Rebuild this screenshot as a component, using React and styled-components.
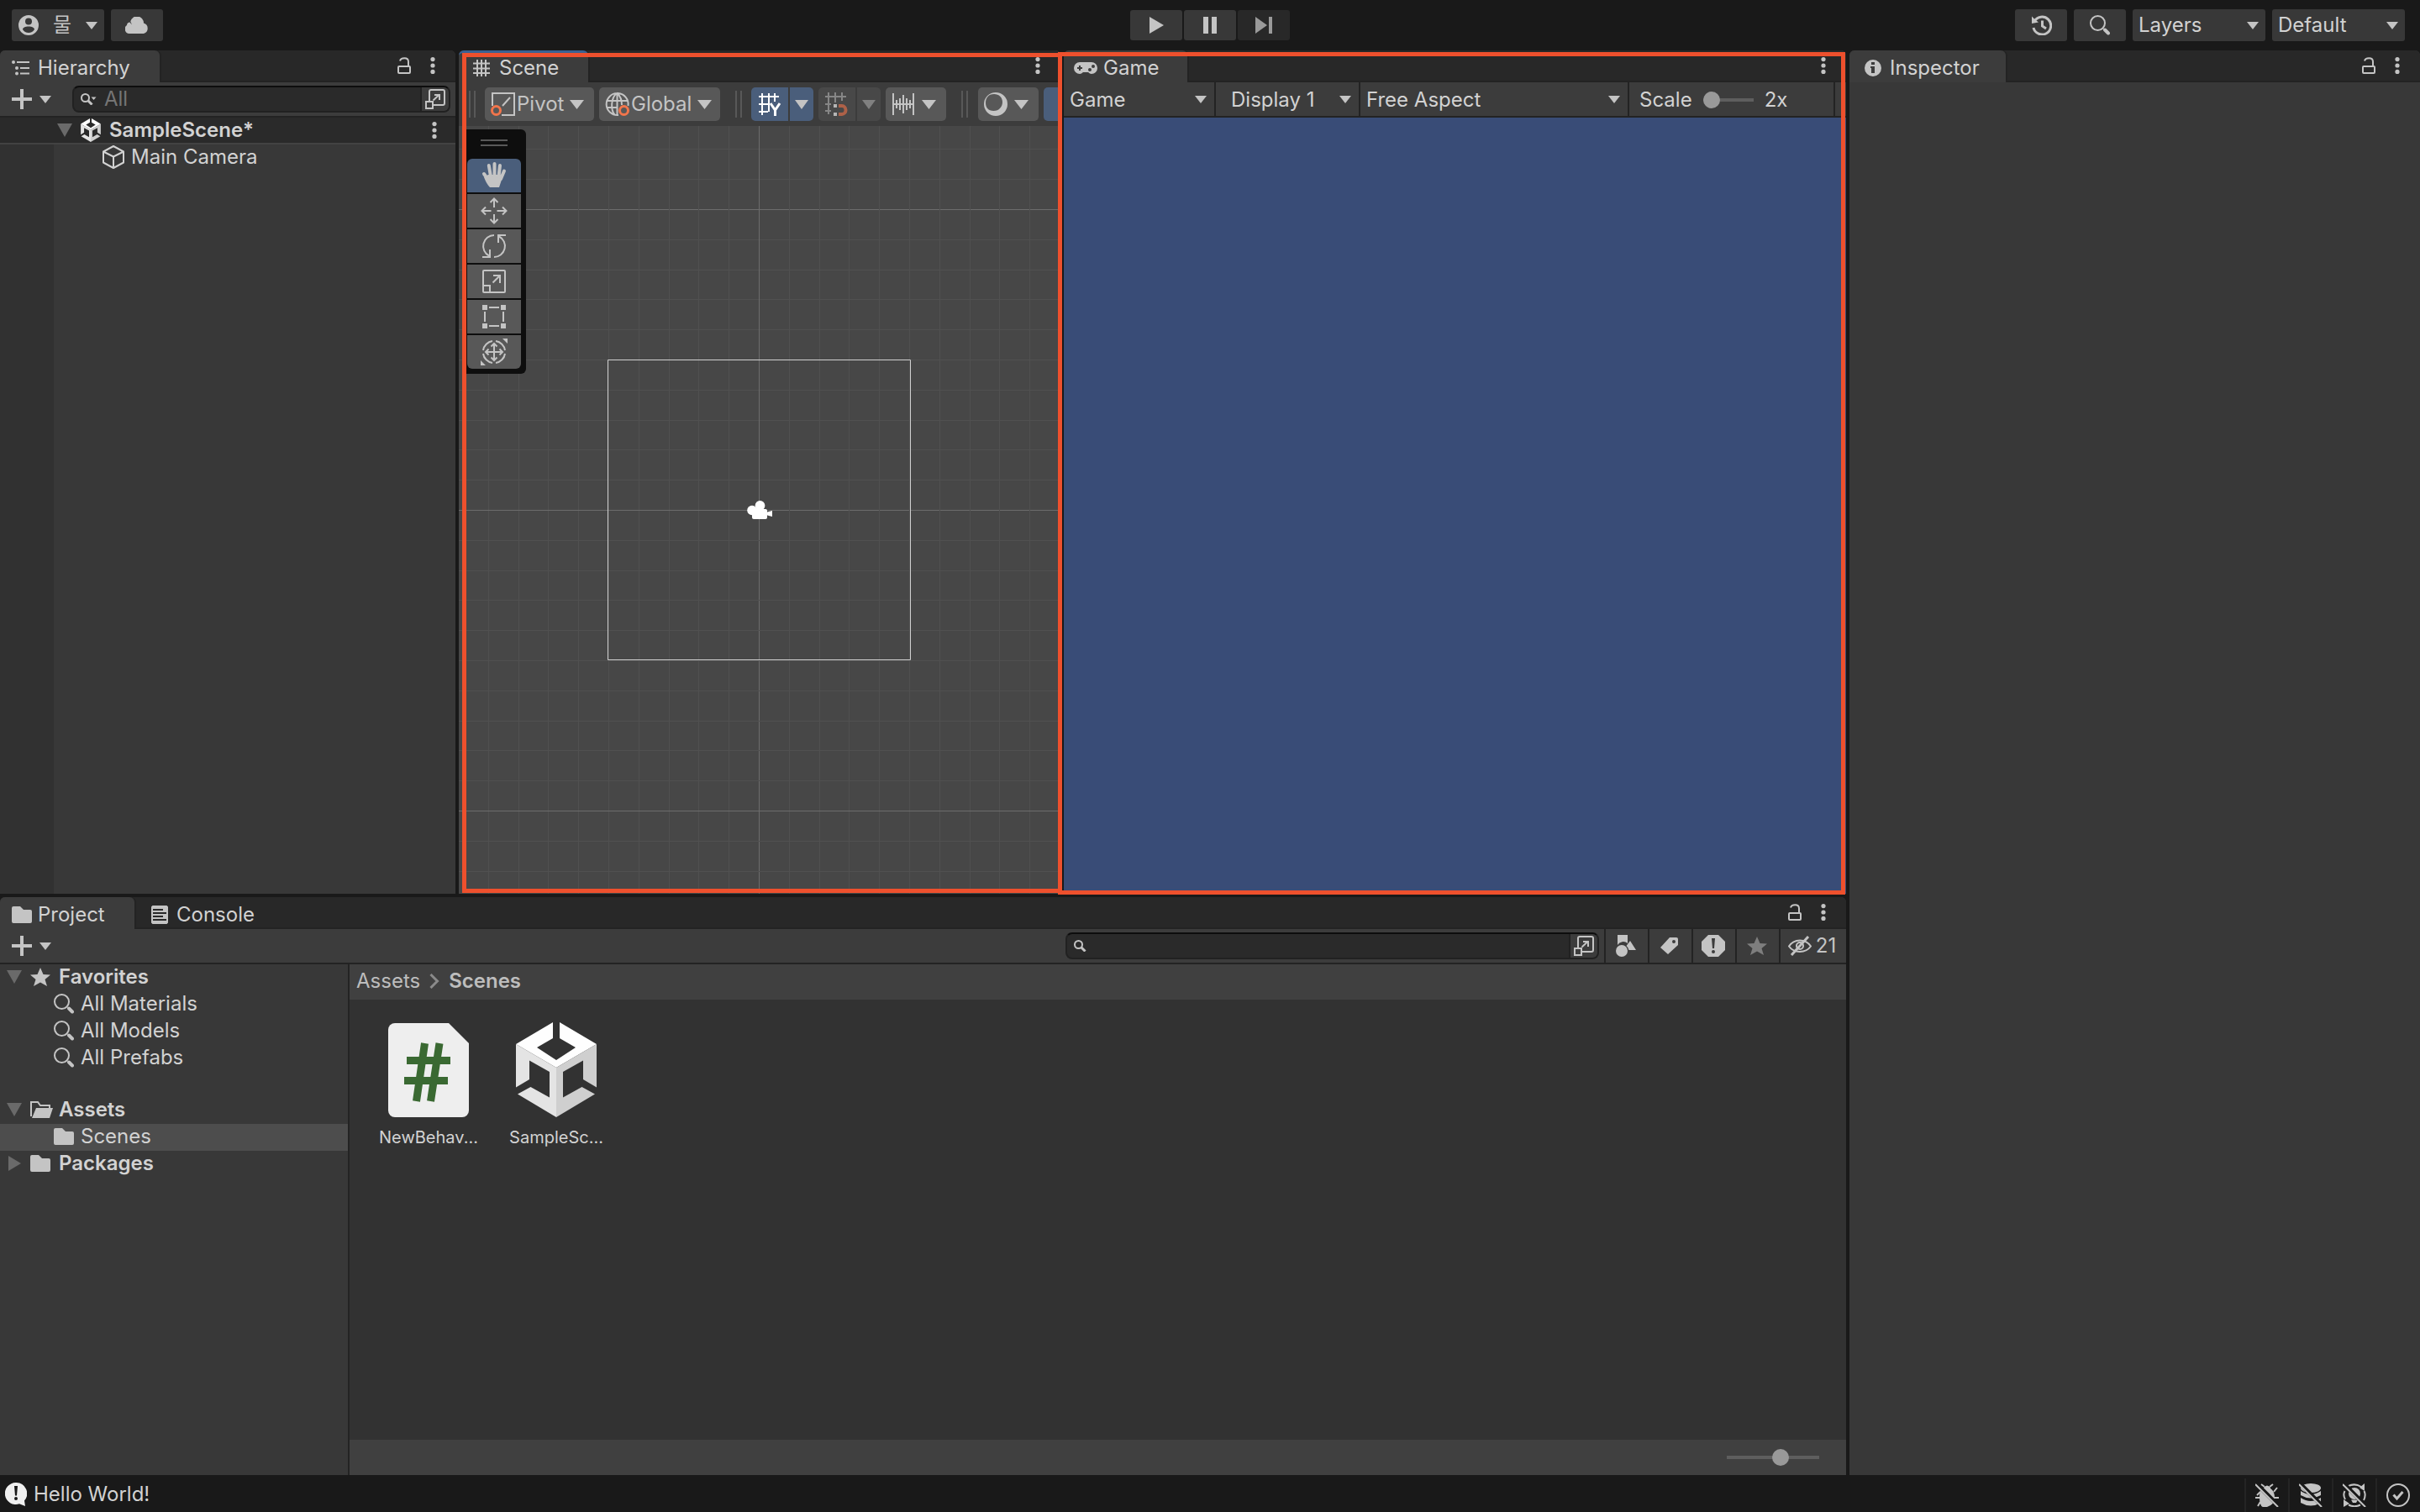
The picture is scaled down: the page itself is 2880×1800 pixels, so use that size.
/* eslint-disable max-len */
import React, { useState } from 'react';
import styled, { createGlobalStyle, css, ThemeProvider } from 'styled-components';

const theme = {
  colors: {
    chrome: '#191919',
    tabBar: '#282828',
    panel: '#383838',
    toolbar: '#3c3c3c',
    line: '#232323',
    field: '#2a2a2a',
    text: '#d2d2d2',
    icon: '#c4c4c4',
    active: '#4a5e7b',
    frame: '#ee502d'
  }
};

const GlobalStyle = createGlobalStyle`
  *, *::before, *::after { box-sizing: border-box; }
  body {
    margin: 0;
    background: #191919;
    color: #d2d2d2;
    font-family: Inter, 'Noto Sans CJK KR', sans-serif;
    font-size: 24px;
    line-height: 32px;
  }
  button, input, select {
    margin: 0;
    padding: 0;
    border: 0;
    background: none;
    color: inherit;
    font: inherit;
  }
  ul { margin: 0; padding: 0; list-style: none; }
  svg { display: block; flex: none; }
`;

/* ---------- icons ---------- */

const Svg = ({ w, h, children, ...rest }) => (
  <svg width={w} height={h} viewBox={`0 0 ${w} ${h}`} fill='currentColor' aria-hidden='true' {...rest}>{children}</svg>
);

const Stroke = ({ width = 2, ...rest }) => (
  <g fill='none' stroke='currentColor' strokeWidth={width} {...rest} />
);

const Caret = ({ w = 14, h = 9 }) => <Svg w={w} h={h}><path d={`M0 0H${w}L${w / 2} ${h}Z`} /></Svg>;

const Dots = () => (
  <Svg w={6} h={20}>
    <circle cx='3' cy='2.6' r='2.6' /><circle cx='3' cy='10' r='2.6' /><circle cx='3' cy='17.4' r='2.6' />
  </Svg>
);

const Lock = () => (
  <Svg w={16} h={20}>
    <Stroke><rect x='1' y='11' width='14' height='8' rx='1' /><path d='M3 4.5C4 .5 13 -.5 13 5.5V11' /></Stroke>
  </Svg>
);

const Plus = () => <Svg w={24} h={24}><path d='M10 0h4v10h10v4H14v10h-4V14H0v-4h10z' /></Svg>;

const AccountIcon = () => (
  <Svg w={24} h={24}>
    <path fillRule='evenodd' d='M12 0a12 12 0 1 1 0 24a12 12 0 0 1 0-24zM12 3.5a4 4 0 1 0 0 8a4 4 0 0 0 0-8zM12 13.5c-4 0-7 1.600-7 3.500c1.500 2.500 4 4 7 4s5.500-1.500 7-4c0-1.900-3-3.500-7-3.500z' />
  </Svg>
);

const CloudIcon = () => (
  <Svg w={28} h={20}>
    <path d='M5.500 20a5.500 5.500 0 0 1-3.500-10c0-2 1.500-3.500 3.500-3.500L8 9.500C7.500 8 6.500 6.500 6.300 5.200A8 8 0 0 1 22 7.500A6.500 6.500 0 0 1 22 20z' />
  </Svg>
);

const HierarchyIcon = () => (
  <Svg w={21} h={18}>
    <circle cx='2' cy='2' r='2' /><circle cx='6' cy='9' r='2' /><circle cx='6' cy='15.500' r='2' />
    <path d='M6 1h15v2H6zM10 8h11v2H10zM10 14.500h11v2H10z' />
  </Svg>
);

const Cube = ({ w = 96, h = 113 }) => (
  <svg width={w} height={h} viewBox='0 0 96 113' aria-hidden='true'>
    <path fill='#fefefe' d='M0 26L44 0V19L25 30L48 45L71 30L52 19V0L96 26L48 54Z' />
    <path fill='#e4e4e4' d='M0 26L48 54V113L2 85.500L17.500 77L40 89.500V59L16 45.500V68L0 77.500Z' />
    <path fill='#cfcfcf' d='M96 26L48 54V113L94 85.500L78.500 77L56 89.500V59L80 45.500V68L96 77.500Z' />
  </svg>
);

const BoxIcon = () => (
  <Svg w={26} h={28}>
    <Stroke strokeLinejoin='round'><path d='M13 1L25 7.500V20.500L13 27L1 20.500V7.500ZM1 7.500L13 13.500L25 7.500M13 13.500V27' /></Stroke>
  </Svg>
);

const JoinIcon = () => (
  <Svg w={24} h={24}>
    <Stroke><path d='M5 14V3a2 2 0 0 1 2-2H21a2 2 0 0 1 2 2V17a2 2 0 0 1-2 2H10' /><rect x='1' y='15' width='8' height='8' /><path d='M9.500 13.500L17 6.500M11 7H17V13' /></Stroke>
  </Svg>
);

const SmallSearch = ({ menu }) => (
  <Svg w={menu ? 19 : 15} h={14}>
    <Stroke width={2}><circle cx='5.500' cy='5.500' r='4.500' /></Stroke>
    <Stroke width={3}><path d='M8.500 8.500L13.500 13.500' /></Stroke>
    {menu && <path d='M12.500 4.500H18.500L15.500 8Z' />}
  </Svg>
);

const SearchIcon = () => (
  <Svg w={24} h={24}>
    <Stroke width={2}><circle cx='9.500' cy='9.500' r='8.500' /></Stroke>
    <Stroke width={4} strokeLinecap='round'><path d='M18 17.500L22 21.500' /></Stroke>
  </Svg>
);

const HistoryIcon = () => (
  <Svg w={25} h={24}>
    <Stroke width={3}><path d='M4 7.500A10.500 10.500 0 1 1 3 15' /><path d='M13.500 6.500V13L18 16' /></Stroke>
    <path d='M1 1.500L4 4.500L9 8.500L1 10Z' />
  </Svg>
);

const PlayIcon = () => <Svg w={18} h={20}><path d='M1 0L18 10L1 20Z' /></Svg>;
const PauseIcon = () => <Svg w={18} h={20}><path d='M1 0H7V20H1ZM11 0H17V20H11Z' /></Svg>;
const StepIcon = () => <Svg w={20} h={20}><path d='M0 0L14 10L0 20ZM16 0H20V20H16Z' /></Svg>;

const SceneIcon = () => (
  <Svg w={20} h={20}><Stroke><path d='M5 0V20M10 0V20M15 0V20M0 4.500H20M0 10.500H20M0 16H20' /></Stroke></Svg>
);

const GameIcon = () => (
  <Svg w={28} h={14}>
    <path fillRule='evenodd' d='M7 0H21a7 7 0 0 1 0 14C19 14 18 12.500 17 12H11C10 12.500 9 14 7 14A7 7 0 0 1 7 0ZM6 4V6H4V8H6V10H8V8H10V6H8V4ZM23 3a2 2 0 1 0 0 4a2 2 0 0 0 0-4ZM19 7a2 2 0 1 0 0 4a2 2 0 0 0 0-4Z' />
  </Svg>
);

const InfoIcon = () => (
  <Svg w={20} h={20}>
    <path fillRule='evenodd' d='M10 0a10 10 0 1 1 0 20a10 10 0 0 1 0-20ZM8 3V6H12V3ZM7 8V10H8V16H12V8Z' />
  </Svg>
);

const PivotIcon = () => (
  <Svg w={30} h={30}>
    <Stroke><path d='M2 17V2H28V28H13M14 17L23 7' /></Stroke>
    <Stroke stroke='#f2754b' width={3}><circle cx='6.500' cy='22.500' r='5' /></Stroke>
  </Svg>
);

const GlobeIcon = () => (
  <Svg w={30} h={30}>
    <Stroke><path d='M16 28A13 13 0 1 1 27.500 17M14.500 2V28M2 11H27M2 19H15M12 28C6.500 23 6.500 7 14.500 2C19 6 20 11 20 16' /></Stroke>
    <Stroke stroke='#f2754b' width={3}><circle cx='22.500' cy='22.500' r='5' /></Stroke>
  </Svg>
);

const GridAxisIcon = () => (
  <Svg w={30} h={30}>
    <Stroke width={2} stroke='#fff'><path d='M2 6H26M2 15H13M2 24H13M6 2V28M14 2V24M21 2V12' /></Stroke>
    <Stroke width={3} stroke='#fff'><path d='M16 14L21.500 22L27 14M21.500 21V29' /></Stroke>
  </Svg>
);

const SnapIcon = () => (
  <Svg w={30} h={30}>
    <Stroke stroke='#868686'><path d='M1 6H26M1 15H8M1 23H8M5 1V27M13 1V13M21 1V11' /></Stroke>
    <Stroke stroke='#ad6148' width={4}><path d='M17 17H21A4.500 5 0 0 1 21 27H17' /></Stroke>
    <path fill='#b5b5b5' d='M11 15H15V19H11ZM11 25H15V29H11Z' />
  </Svg>
);

const RulerIcon = () => (
  <Svg w={28} h={28}>
    <Stroke><path d='M2 1V27M26 1V27M1 14H27M6 9V19M10 7V21M14 3V25M18 7V21M22 9V19' /></Stroke>
  </Svg>
);

const ShadeIcon = () => (
  <Svg w={28} h={28}>
    <path fillRule='evenodd' d='M14 0a14 14 0 1 1 0 28a14 14 0 0 1 0-28ZM12 2C5 2 2 7 2 12.500S5 22 11.500 22S22 17 22 11.500S18 2 12 2Z' />
  </Svg>
);

const HandIcon = () => (
  <Svg w={32} h={32}>
    <path d='M9 15H24L26 18L22 30H11Q7 26 4 18Z' />
    <Stroke width={4} strokeLinecap='round'><path d='M16.500 2V17M9.800 4L12 17M23 4L21.500 17M28 10.500L24 20M4 14L9 21' /></Stroke>
  </Svg>
);

const MoveIcon = () => (
  <Svg w={32} h={32}>
    <Stroke><path d='M16 1.500V12M11.500 6L16 1.500L20.500 6M16 30.500V20M11.500 26L16 30.500L20.500 26M1.500 16H12.500M6 11.500L1.500 16L6 20.500M30.500 16H19.500M26 11.500L30.500 16L26 20.500' /></Stroke>
  </Svg>
);

const RotateIcon = () => (
  <Svg w={32} h={32}>
    <Stroke><path d='M16 3A13 13 0 0 0 10 27.500M2 29H11V20M16 29A13 13 0 0 0 22 4.500M30 3H21V12' /></Stroke>
  </Svg>
);

const ScaleIcon = () => (
  <Svg w={32} h={32}>
    <Stroke><rect x='3' y='3' width='26' height='26' rx='1' /><path d='M3 21H11V29M14.500 17.500L23 9M15 9H23V18' /></Stroke>
  </Svg>
);

const RectIcon = () => (
  <Svg w={32} h={32}>
    <path d='M2 2H8V8H2ZM24 2H30V8H24ZM2 24H8V30H2ZM24 24H30V30H24ZM10 4H22V6H10ZM10 26H22V28H10ZM4 10H6V22H4ZM26 10H28V22H26Z' />
  </Svg>
);

const TransformIcon = () => (
  <Svg w={32} h={32}>
    <Stroke><path d='M14 3A13 13 0 0 0 3 14M18 3A13 13 0 0 1 29 14M3 18A13 13 0 0 0 14 29M29 18A13 13 0 0 1 18 29' /><path d='M16 6V26M6 16H26M12.500 9.500L16 6L19.500 9.500M12.500 22.500L16 26L19.500 22.500M9.500 12.500L6 16L9.500 19.500M22.500 12.500L26 16L22.500 19.500' /></Stroke>
    <path d='M26 0H32V6ZM0 26V32H6Z' />
  </Svg>
);

const FolderIcon = () => <Svg w={24} h={20}><path d='M2 0H10L14 4H22a2 2 0 0 1 2 2V18a2 2 0 0 1-2 2H2a2 2 0 0 1-2-2V2a2 2 0 0 1 2-2Z' /></Svg>;

const OpenFolderIcon = () => (
  <Svg w={27} h={20}>
    <Stroke><path d='M1 18V1H9L12 5H23V8' /></Stroke>
    <path d='M7 8H27L23 20H2Z' />
  </Svg>
);

const ConsoleIcon = () => (
  <Svg w={20} h={22}>
    <path fillRule='evenodd' d='M1.500 0H18.500L20 1.500V20.500L18.500 22H1.500L0 20.500V1.500ZM2 4V6H14V4ZM2 8V10H18V8ZM2 12V14H14V12ZM2 16V18H18V16Z' />
  </Svg>
);

const StarIcon = () => <Svg w={24} h={22}><path d='M12 0L15.500 8L24 8.500L17.500 14L20 22L12 17.500L4 22L6.500 14L0 8.500L8.500 8Z' /></Svg>;

const ShapesIcon = () => (
  <Svg w={24} h={26}>
    <path d='M2 0H14V10A8 8 0 0 0 2 12Z' /><circle cx='7' cy='19' r='7' /><path d='M17 7L24 18H15.500A9 9 0 0 0 12.500 13Z' />
  </Svg>
);

const TagIcon = () => (
  <Svg w={21} h={20}><path fillRule='evenodd' d='M11 0H19a2 2 0 0 1 2 2V9L9 20L0 12ZM16 3a2 2 0 1 0 0 4a2 2 0 0 0 0-4Z' /></Svg>
);

const AlertIcon = () => (
  <Svg w={28} h={26}>
    <path fillRule='evenodd' d='M8 0H20L28 8V18L20 26H8L0 18V8ZM12 4L13 16H15L16 4ZM14 18a2 2 0 1 0 0 4a2 2 0 0 0 0-4Z' />
  </Svg>
);

const EyeOffIcon = () => (
  <Svg w={28} h={24}>
    <Stroke><path d='M1 12.500C7 3 21 3 27 12.500C21 21 7 21 1 12.500Z' /><circle cx='14' cy='12' r='4' /></Stroke>
    <Stroke width={3}><path d='M24 1L4 23' /></Stroke>
  </Svg>
);

const ChevronIcon = () => <Svg w={12} h={18}><Stroke width={3}><path d='M1.500 1L9.500 9L1.500 17' /></Stroke></Svg>;

const ScriptFile = () => (
  <svg width='96' height='113' viewBox='0 0 96 113' aria-hidden='true'>
    <path fill='#eee' d='M8 1H72L96 25V105a8 8 0 0 1-8 8H8a8 8 0 0 1-8-8V9a8 8 0 0 1 8-8Z' />
    <path fill='none' stroke='#3a6932' strokeWidth='9' d='M43.500 25L33.500 94M61 25L50.500 94M22 45.500H74M19 69.500H71' />
  </svg>
);

const BubbleIcon = () => (
  <Svg w={26} h={28} fill='#f0f0f0'>
    <path fillRule='evenodd' d='M13 0A13 13 0 0 1 23 21.500L24 28L17 25.300A13 13 0 1 1 13 0ZM11 4L12 15.500H14L15 4ZM13 17a2 2 0 1 0 0 4a2 2 0 0 0 0-4Z' />
  </Svg>
);

const Slash = () => (
  <React.Fragment>
    <path d='M1 0L30 29' stroke='#191919' strokeWidth='5' />
    <path d='M0 1L27 28' stroke='currentColor' strokeWidth='2' />
  </React.Fragment>
);

const BugOffIcon = () => (
  <Svg w={28} h={28}>
    <path d='M10 5Q14 0 18 5V6Q23 9 23 17T14 28T5 17T10 6Z' />
    <Stroke><path d='M11 4L7 1M17 4L21 1M22 10L26 5M6 10L2 14M6 17H0M22 17H28M6 22L3 27M22 22L25 26' /></Stroke>
    <Slash />
  </Svg>
);

const CacheOffIcon = () => (
  <Svg w={28} h={28}>
    <ellipse cx='14' cy='5.500' rx='12' ry='5.500' />
    <path d='M2 9Q14 17 26 9V14Q14 21 2 14ZM2 17Q14 25 26 17V23Q14 30 2 23Z' />
    <Slash />
  </Svg>
);

const LightOffIcon = () => (
  <Svg w={28} h={28}>
    <circle cx='14' cy='12' r='7' /><path d='M10 19.500H18L16 23H12Z' />
    <Stroke><path d='M6 3.500Q14 -1 22 4M7 25.500Q14 29 21 25.500M2.500 9Q0 14 3 19M25.500 9Q28 14 25 20' /></Stroke>
    <path d='M20 5L26 0V9ZM1 19V28L8 24Z' />
    <Slash />
  </Svg>
);

const CheckIcon = () => (
  <Svg w={28} h={28}><Stroke><circle cx='14' cy='14' r='13' /></Stroke><Stroke width={3}><path d='M8.500 13.500L12.500 18L19.500 10' /></Stroke></Svg>
);

/* ---------- shell ---------- */

const Editor = styled.div`
  display: grid;
  grid-template-rows: 60px minmax(0, 1fr) 44px;
  height: 100vh;
  background: ${props => props.theme.colors.chrome};
`;

const TopBar = styled.header`
  display: grid;
  grid-template-columns: 1fr auto 1fr;
  align-items: center;
  padding: 0 18px 0 14px;
`;

const BarGroup = styled.div`
  display: flex;
  align-items: center;
  justify-content: ${props => props.$align || 'flex-start'};
  gap: 8px;
`;

const BarButton = styled.button`
  display: flex;
  align-items: center;
  justify-content: center;
  gap: 17px;
  width: ${props => props.$wide ? 110 : 62}px;
  height: 38px;
  border-radius: 3px;
  background: #383838;
  color: ${props => props.theme.colors.icon};
`;

const PlayGroup = styled(BarGroup)`
  gap: 2px;
  margin-left: 4px;
`;

const PlayButton = styled(BarButton)`
  height: 36px;
  &:disabled {
    background: #282828;
    color: #9a9a9a;
  }
`;

const SelectBox = styled.label`
  display: grid;
  align-items: center;
  width: ${props => props.$width ? `${props.$width}px` : 'auto'};
  height: ${props => props.$flat ? '100%' : '38px'};
  border-radius: ${props => props.$flat ? 0 : 3}px;
  border-right: ${props => props.$flat ? '2px solid #232323' : '0'};
  background: ${props => props.$flat ? 'transparent' : '#383838'};
  color: ${props => props.theme.colors.icon};
  > select {
    grid-area: 1 / 1;
    appearance: none;
    width: 100%;
    padding-top: ${props => props.$flat ? 2 : 0}px;
    padding-left: ${props => props.$inset || 7}px;
    color: ${props => props.theme.colors.text};
  }
  > svg {
    grid-area: 1 / 1;
    justify-self: end;
    margin-right: ${props => props.$flat ? 9 : 8}px;
    pointer-events: none;
  }
`;

const Select = ({ label, value, ...rest }) => (
  <SelectBox {...rest}>
    <select aria-label={label} defaultValue={value}><option>{value}</option></select>
    <Caret />
  </SelectBox>
);

const Workspace = styled.main`
  display: grid;
  grid-template-columns: minmax(0, 2197fr) minmax(0, 679fr);
  gap: 4px;
`;

const LeftArea = styled.div`
  display: grid;
  grid-template-rows: minmax(0, 1004fr) minmax(0, 688fr);
  gap: 4px;
  min-height: 0;
`;

const Views = styled.div`
  display: grid;
  grid-template-columns: minmax(0, 542fr) minmax(0, 716fr) minmax(0, 931fr);
  gap: 4px;
`;

const Panel = styled.section`
  position: relative;
  display: flex;
  flex-direction: column;
  min-width: 0;
  min-height: 0;
  background: ${props => props.theme.colors.panel};
  border-radius: 6px 6px 0 0;
`;

const Frame = styled.div`
  position: absolute;
  inset: ${props => props.$inset};
  border: 5px solid ${props => props.theme.colors.frame};
  pointer-events: none;
  z-index: 2;
`;

const TabBar = styled.div`
  display: flex;
  flex: none;
  align-items: center;
  height: 38px;
  padding-right: 24px;
  border-radius: 6px 6px 0 0;
  background: ${props => props.theme.colors.tabBar};
  box-shadow: inset 0 -2px ${props => props.theme.colors.line};
`;

const Tab = styled.button`
  display: flex;
  align-items: center;
  gap: ${props => props.$gap || 10}px;
  width: ${props => props.$width}px;
  height: 38px;
  padding-top: 3px;
  padding-left: ${props => props.$inset || 14}px;
  border-radius: 6px 6px 0 0;
  color: ${props => props.theme.colors.text};
  ${props => props.$selected && css`
    background: ${props.theme.colors.toolbar};
    box-shadow: 2px 0 ${props.theme.colors.line};
  `}
  ${props => props.$focused && css`
    border-top: 3px solid #3a6192;
    padding-top: 0;
  `}
  > svg { color: ${props => props.theme.colors.icon}; }
`;

const PanelActions = styled.div`
  display: flex;
  gap: 23px;
  height: 20px;
  margin-left: auto;
  margin-bottom: 2px;
`;

const IconButton = styled.button`
  display: flex;
  align-items: center;
  justify-content: center;
  color: ${props => props.theme.colors.icon};
`;

const Actions = ({ lockable }) => (
  <PanelActions>
    {lockable && <IconButton aria-label='Lock'><Lock /></IconButton>}
    <IconButton aria-label='More options'><Dots /></IconButton>
  </PanelActions>
);

const Toolbar = styled.div`
  display: flex;
  flex: none;
  align-items: center;
  height: 42px;
  padding-left: ${props => props.$inset || 0}px;
  background: ${props => props.theme.colors.toolbar};
  border-bottom: 2px solid ${props => props.theme.colors.line};
`;

const AddButton = styled(IconButton)`
  gap: 9px;
`;

const SearchField = styled.div`
  display: flex;
  align-items: center;
  flex: ${props => props.$width ? 'none' : 1};
  width: ${props => props.$width || 'auto'};
  height: 32px;
  margin-left: ${props => props.$start};
  margin-right: 6px;
  padding-left: 8px;
  border: 2px solid #212121;
  border-top-color: #0d0d0d;
  border-radius: 8px;
  background: ${props => props.theme.colors.field};
  color: ${props => props.theme.colors.icon};
  > input {
    flex: 1;
    min-width: 0;
    padding-left: 9px;
    outline: none;
  }
  > input::placeholder { color: #757575; opacity: 1; }
  > button {
    width: 34px;
    height: 28px;
    border-left: 2px solid #212121;
    border-radius: 0 6px 6px 0;
    background: ${props => props.theme.colors.toolbar};
  }
`;

/* ---------- hierarchy ---------- */

const SceneRow = styled.div`
  display: flex;
  flex: none;
  align-items: center;
  height: 32px;
  padding: 0 22px 0 68px;
  background: ${props => props.theme.colors.field};
  border-bottom: 2px solid #424242;
  color: ${props => props.theme.colors.text};
  font-weight: 600;
  > svg + svg { margin: 0 10px; }
  > button { margin-left: auto; }
`;

const HierarchyBody = styled.ul`
  flex: 1;
  border-left: 64px solid #313131;
`;

const HierarchyItem = styled.li`
  display: flex;
  align-items: center;
  gap: 8px;
  height: 32px;
  padding: 0 0 2px 58px;
`;

const Foldout = ({ open }) => (
  <Svg w={18} h={18} fill='#6a6a6a'><path d={open ? 'M0 1H18L9 17Z' : 'M2 0L17 9L2 18Z'} /></Svg>
);

const Hierarchy = () => (
  <Panel aria-label='Hierarchy'>
    <TabBar>
      <Tab $selected $width={190}><HierarchyIcon />Hierarchy</Tab>
      <Actions lockable />
    </TabBar>
    <Toolbar $inset={14}>
      <AddButton aria-label='Create'><Plus /><Caret /></AddButton>
      <SearchField $start='25px'>
        <SmallSearch menu />
        <input type='text' placeholder='All' aria-label='Search hierarchy' />
        <IconButton aria-label='Open in search'><JoinIcon /></IconButton>
      </SearchField>
    </Toolbar>
    <SceneRow>
      <Foldout open />
      <Cube w={24} h={28} />
      SampleScene*
      <IconButton aria-label='Scene options'><Dots /></IconButton>
    </SceneRow>
    <HierarchyBody>
      <HierarchyItem><BoxIcon />Main Camera</HierarchyItem>
    </HierarchyBody>
  </Panel>
);

/* ---------- scene view ---------- */

const SceneToolbar = styled.div`
  display: flex;
  flex: none;
  align-items: center;
  gap: 6px;
  height: 52px;
  padding-left: 12px;
  overflow: hidden;
  background: ${props => props.theme.colors.toolbar};
`;

const Grip = styled.div`
  flex: none;
  width: 8px;
  height: 32px;
  margin: ${props => props.$margin || '0'};
  border: 2px solid #585858;
  border-width: 0 2px;
`;

const ToolButton = styled.button`
  display: flex;
  flex: none;
  align-items: center;
  justify-content: ${props => props.$menu ? 'flex-start' : 'center'};
  gap: ${props => props.$gap || 0}px;
  width: ${props => props.$width}px;
  height: 40px;
  padding-left: ${props => props.$menu ? 7 : 0}px;
  border-radius: ${props => props.$radius || '5px'};
  background: ${props => props.$on ? props.theme.colors.active : '#585858'};
  color: ${props => props.theme.colors.icon};
  &:disabled {
    background: #484848;
    color: #808080;
  }
  > span { margin-right: 6px; }
`;

const Split = styled.div`
  display: flex;
  flex: none;
  gap: 2px;
`;

const Canvas = styled.div`
  position: relative;
  display: flex;
  flex: 1;
  min-height: 0;
  background: #474747;
  > svg {
    width: 100%;
    height: 100%;
  }
`;

const Palette = styled.div`
  position: absolute;
  top: 4px;
  left: 4px;
  display: flex;
  flex-direction: column;
  gap: 2px;
  padding: 12px 6px 6px;
  border-radius: 0 6px 6px 0;
  background: #0e0e0e;
  z-index: 1;
`;

const PaletteGrip = styled.div`
  width: 32px;
  height: 8px;
  margin: 0 auto 13px;
  border: 2px solid #585858;
  border-width: 2px 0;
`;

const tools = [
  { name: 'Hand', icon: HandIcon },
  { name: 'Move', icon: MoveIcon },
  { name: 'Rotate', icon: RotateIcon },
  { name: 'Scale', icon: ScaleIcon },
  { name: 'Rect', icon: RectIcon },
  { name: 'Transform', icon: TransformIcon }
];

const toolRadius = index => {
  if (index === 0) return '6px 6px 0 0';
  return index === tools.length - 1 ? '0 0 6px 6px' : '0px';
};

const steps = Array.from({ length: 41 }, (_, i) => i - 20);
const lineColor = n => n % 10 === 0 ? '#6c6c6c' : '#505050';

const SceneGrid = () => (
  <svg viewBox='0 0 716 914' preserveAspectRatio='xMidYMid slice' aria-hidden='true'>
    {steps.map(n => {
      const x = 357.5 + Math.round(n * 35.8);
      const y = 457.5 + Math.round(n * 35.8);
      return (
        <React.Fragment key={n}>
          <path d={`M${x} -400V1400`} stroke={lineColor(n)} />
          <path d={`M-400 ${y}H1200`} stroke={lineColor(n)} />
        </React.Fragment>
      );
    })}
    <path d='M177.500 278.500H537.500V635.500H177.500Z' fill='none' stroke='#d0d0d0' />
    <g fill='#fff'>
      <circle cx='349' cy='457.500' r='5.800' />
      <circle cx='358.500' cy='452' r='5.900' />
      <rect x='349' y='456' width='18' height='12' rx='2' />
      <path d='M366 460L369 459L373 458V465L369 464L366 463Z' />
    </g>
  </svg>
);

const SceneView = () => {
  const [tool, setTool] = useState('Hand');
  return (
    <Panel aria-label='Scene'>
      <TabBar>
        <Tab $selected $focused $width={154} $inset={17} $gap={11}><SceneIcon />Scene</Tab>
        <Actions />
      </TabBar>
      <SceneToolbar>
        <Grip $margin='0 5px 0 0' />
        <ToolButton $menu $gap={1} $width={130}><PivotIcon /><span>Pivot</span><Caret w={17} h={11} /></ToolButton>
        <ToolButton $menu $gap={1} $width={144}><GlobeIcon /><span>Global</span><Caret w={17} h={11} /></ToolButton>
        <Grip $margin='0 5px 0 12px' />
        <Split>
          <ToolButton $on $width={44} $radius='5px 0 0 5px' aria-label='Grid axis'><GridAxisIcon /></ToolButton>
          <ToolButton $on $width={28} $radius='0 5px 5px 0' aria-label='Grid settings'><Caret w={16} h={11} /></ToolButton>
        </Split>
        <Split>
          <ToolButton disabled $width={44} $radius='5px 0 0 5px' aria-label='Snap to grid'><SnapIcon /></ToolButton>
          <ToolButton disabled $width={28} $radius='0 5px 5px 0' aria-label='Snap settings'><Caret w={16} h={11} /></ToolButton>
        </Split>
        <ToolButton $menu $gap={8} $width={72} aria-label='Increment snapping'><RulerIcon /><Caret w={17} h={11} /></ToolButton>
        <Grip $margin='0 6px 0 12px' />
        <ToolButton $menu $gap={8} $width={72} aria-label='Shading mode'><ShadeIcon /><Caret w={17} h={11} /></ToolButton>
        <ToolButton $on $width={44} aria-label='2D view' />
      </SceneToolbar>
      <Canvas>
        <SceneGrid />
        <Palette role='toolbar' aria-label='Tools'>
          <PaletteGrip />
          {tools.map(({ name, icon: ToolIcon }, index) => (
            <ToolButton
              key={name}
              $width={64}
              $radius={toolRadius(index)}
              $on={tool === name}
              aria-label={name}
              onClick={() => setTool(name)}
            >
              <ToolIcon />
            </ToolButton>
          ))}
        </Palette>
      </Canvas>
      <Frame $inset='3px -2px 1px 4px' />
    </Panel>
  );
};

/* ---------- game view ---------- */

const Range = styled.input`
  appearance: none;
  width: ${props => props.$width}px;
  height: 20px;
  background: linear-gradient(#5e5e5e, #5e5e5e) center / 100% 4px no-repeat;
  &::-webkit-slider-thumb {
    appearance: none;
    width: 20px;
    height: 20px;
    border-radius: 50%;
    background: #999;
  }
`;

const ScaleControl = styled.label`
  display: flex;
  align-items: center;
  gap: 13px;
  width: 245px;
  height: 100%;
  padding-top: 2px;
  padding-left: 12px;
  border-right: 2px solid ${props => props.theme.colors.line};
`;

const GameScreen = styled.div`
  flex: 1;
  background: #394c77;
`;

const GameView = () => (
  <Panel aria-label='Game'>
    <TabBar>
      <Tab $selected $width={147} $inset={12} $gap={7}><GameIcon />Game</Tab>
      <Actions />
    </TabBar>
    <Toolbar>
      <Select $flat $width={181} label='View' value='Game' />
      <Select $flat $width={172} $inset={18} label='Display' value='Display 1' />
      <Select $flat $width={320} label='Aspect' value='Free Aspect' />
      <ScaleControl>
        Scale
        <Range type='range' $width={60} min='2' max='10' defaultValue='2' />
        <span>2x</span>
      </ScaleControl>
    </Toolbar>
    <GameScreen />
    <Frame $inset='2px 1px -1px -7px' />
  </Panel>
);

/* ---------- project ---------- */

const FilterButton = styled(IconButton)`
  gap: 5px;
  width: ${props => props.$width || 52}px;
  height: 40px;
  padding-right: 3px;
  border-left: 2px solid ${props => props.theme.colors.line};
  color: ${props => props.$dim ? '#7e7e7e' : props.theme.colors.icon};
`;

const ProjectBody = styled.div`
  display: grid;
  grid-template-columns: 416px minmax(0, 1fr);
  flex: 1;
  min-height: 0;
`;

const Tree = styled.ul`
  border-right: 2px solid ${props => props.theme.colors.line};
`;

const TreeItem = styled.li`
  display: flex;
  align-items: center;
  height: 32px;
  margin-top: ${props => props.$spaced ? 30 : 0}px;
  padding-left: ${props => props.$nested ? 64 : 8}px;
  padding-bottom: 2px;
  background: ${props => props.$selected ? '#4d4d4d' : 'transparent'};
  font-weight: ${props => props.$nested ? 400 : 600};
`;

const TreeIcon = styled.span`
  display: flex;
  width: ${props => props.$nested ? 32 : 34}px;
  margin-left: ${props => props.$nested ? 0 : 10}px;
  color: ${props => props.theme.colors.icon};
`;

const treeItems = [
  { label: 'Favorites', icon: StarIcon, open: true },
  { label: 'All Materials', icon: SearchIcon, nested: true },
  { label: 'All Models', icon: SearchIcon, nested: true },
  { label: 'All Prefabs', icon: SearchIcon, nested: true },
  { label: 'Assets', icon: OpenFolderIcon, open: true, spaced: true },
  { label: 'Scenes', icon: FolderIcon, nested: true, selected: true },
  { label: 'Packages', icon: FolderIcon }
];

const Browser = styled.div`
  display: flex;
  flex-direction: column;
  background: #323232;
`;

const Breadcrumbs = styled.nav`
  display: flex;
  flex: none;
  align-items: center;
  gap: 11px;
  height: 42px;
  padding: 0 0 2px 8px;
  background: #404040;
  color: #bdbdbd;
  > a { color: inherit; text-decoration: none; }
  > svg { color: #8a8a8a; }
  > strong { font-weight: 600; }
`;

const AssetGrid = styled.ul`
  display: flex;
  flex: 1;
  align-items: flex-start;
  gap: 24px;
  padding: 27px 30px;
`;

const Asset = styled.li`
  display: flex;
  flex-direction: column;
  align-items: center;
  gap: 8px;
  width: 128px;
  font-size: 20px;
  white-space: nowrap;
`;

const BrowserFooter = styled.div`
  display: flex;
  flex: none;
  align-items: center;
  justify-content: flex-end;
  height: 42px;
  padding-right: 32px;
  background: #404040;
`;

const Project = () => (
  <Panel aria-label='Project'>
    <TabBar>
      <Tab $selected $width={160} $gap={7}><FolderIcon />Project</Tab>
      <Tab $width={160} $inset={20} $gap={10}><ConsoleIcon />Console</Tab>
      <Actions lockable />
    </TabBar>
    <Toolbar $inset={14}>
      <AddButton aria-label='Create asset'><Plus /><Caret /></AddButton>
      <SearchField $start='auto' $width='635px'>
        <SmallSearch />
        <input type='text' aria-label='Search project' />
        <IconButton aria-label='Open in search'><JoinIcon /></IconButton>
      </SearchField>
      <FilterButton aria-label='Search by type'><ShapesIcon /></FilterButton>
      <FilterButton aria-label='Search by label'><TagIcon /></FilterButton>
      <FilterButton aria-label='Search by log'><AlertIcon /></FilterButton>
      <FilterButton $dim aria-label='Save search'><StarIcon /></FilterButton>
      <FilterButton $width={80}><EyeOffIcon />21</FilterButton>
    </Toolbar>
    <ProjectBody>
      <Tree>
        {treeItems.map(({ label, icon: ItemIcon, nested, open, spaced, selected }) => (
          <TreeItem key={label} $nested={nested} $spaced={spaced} $selected={selected}>
            {!nested && <Foldout open={open} />}
            <TreeIcon $nested={nested}><ItemIcon /></TreeIcon>
            {label}
          </TreeItem>
        ))}
      </Tree>
      <Browser>
        <Breadcrumbs aria-label='Folder path'>
          <a href='#assets'>Assets</a>
          <ChevronIcon />
          <strong>Scenes</strong>
        </Breadcrumbs>
        <AssetGrid>
          <Asset><ScriptFile />NewBehav...</Asset>
          <Asset><Cube />SampleSc...</Asset>
        </AssetGrid>
        <BrowserFooter>
          <Range type='range' $width={110} min='0' max='100' defaultValue='60' aria-label='Thumbnail size' />
        </BrowserFooter>
      </Browser>
    </ProjectBody>
  </Panel>
);

/* ---------- status bar ---------- */

const StatusBar = styled.footer`
  display: flex;
  align-items: center;
  padding: 0 1px 0 6px;
`;

const StatusMessage = styled.div`
  display: flex;
  align-items: center;
  gap: 8px;
  margin-right: auto;
  padding-top: 1px;
`;

const StatusButton = styled(IconButton)`
  align-self: flex-end;
  width: 52px;
  height: 40px;
  border-left: 2px solid #242424;
`;

export default function App () {
  return (
    <ThemeProvider theme={theme}>
      <GlobalStyle />
      <Editor>
        <TopBar>
          <BarGroup>
            <BarButton $wide><AccountIcon /><span>물</span><Caret /></BarButton>
            <BarButton aria-label='Cloud services'><CloudIcon /></BarButton>
          </BarGroup>
          <PlayGroup>
            <PlayButton aria-label='Play'><PlayIcon /></PlayButton>
            <PlayButton aria-label='Pause'><PauseIcon /></PlayButton>
            <PlayButton disabled aria-label='Step'><StepIcon /></PlayButton>
          </PlayGroup>
          <BarGroup $align='flex-end'>
            <BarButton aria-label='Undo history'><HistoryIcon /></BarButton>
            <BarButton aria-label='Search'><SearchIcon /></BarButton>
            <Select $width={158} label='Layers' value='Layers' />
            <Select $width={158} label='Layout' value='Default' />
          </BarGroup>
        </TopBar>
        <Workspace>
          <LeftArea>
            <Views>
              <Hierarchy />
              <SceneView />
              <GameView />
            </Views>
            <Project />
          </LeftArea>
          <Panel aria-label='Inspector'>
            <TabBar>
              <Tab $selected $width={186} $inset={18}><InfoIcon />Inspector</Tab>
              <Actions lockable />
            </TabBar>
          </Panel>
        </Workspace>
        <StatusBar>
          <StatusMessage><BubbleIcon />Hello World!</StatusMessage>
          <StatusButton aria-label='Debugger off'><BugOffIcon /></StatusButton>
          <StatusButton aria-label='Cache server off'><CacheOffIcon /></StatusButton>
          <StatusButton aria-label='Auto lighting off'><LightOffIcon /></StatusButton>
          <StatusButton aria-label='Background tasks'><CheckIcon /></StatusButton>
        </StatusBar>
      </Editor>
    </ThemeProvider>
  );
}
